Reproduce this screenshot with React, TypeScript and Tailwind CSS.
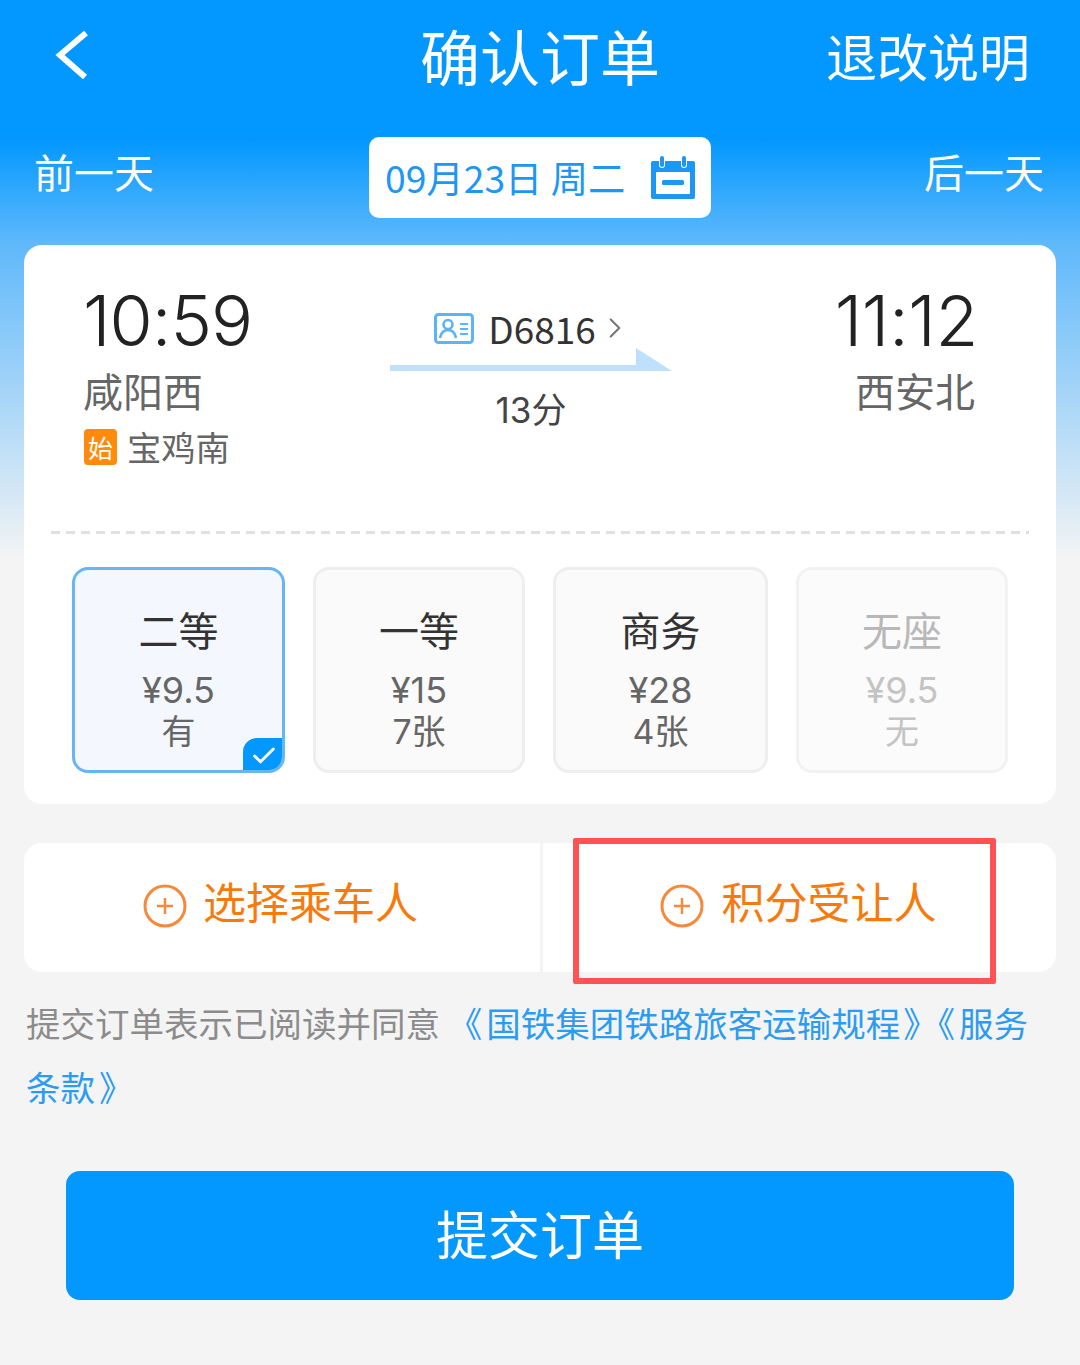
import { ChevronRight, Check } from 'lucide-react';

const seats = [
  { name: '二等', price: '¥9.5', left: '有', active: true, off: false, w: 'w-[213px]' },
  { name: '一等', price: '¥15', left: '7张', active: false, off: false, w: 'w-[212px]' },
  { name: '商务', price: '¥28', left: '4张', active: false, off: false, w: 'w-[215px]' },
  { name: '无座', price: '¥9.5', left: '无', active: false, off: true, w: 'w-[212px]' },
];

const BackIcon = () => (
  <svg width="34" height="48" viewBox="0 0 34 48" fill="none" stroke="#ffffff" strokeWidth="6">
    <path d="M31 2L5 24l25 22" />
  </svg>
);

const PlusIcon = () => (
  <svg width="44" height="44" viewBox="0 0 44 44" fill="none" stroke="#f58a3c" strokeWidth="3">
    <circle cx="22" cy="22" r="20" />
    <path d="M22 14v16M14 22h16" strokeWidth="2.5" />
  </svg>
);

const CalendarIcon = () => (
  <svg width="46" height="46" viewBox="0 0 46 46">
    <path
      d="M3 6h6v4a3 3 0 0 0 6 0V6h16v4a3 3 0 0 0 6 0V6h6a2 2 0 0 1 2 2v34a2 2 0 0 1-2 2H3a2 2 0 0 1-2-2V8a2 2 0 0 1 2-2z"
      fill="#1c97f3"
    />
    <rect x="6" y="17" width="34" height="22" rx="1" fill="#fff" />
    <rect x="12" y="25" width="22" height="5" rx="1.5" fill="#1c97f3" />
    <rect x="10" y="1" width="4" height="11" rx="2" fill="#1c97f3" />
    <rect x="32" y="1" width="4" height="11" rx="2" fill="#1c97f3" />
  </svg>
);

const IdIcon = () => (
  <svg width="40" height="31" viewBox="0 0 40 31" fill="none" stroke="#5cb3f5" strokeWidth="3">
    <rect x="1.5" y="1.5" width="37" height="28" rx="3" />
    <circle cx="14" cy="11.5" r="4.5" strokeWidth="2.6" />
    <path d="M6 25c1-5 4-8 8-8s7 3 8 8" strokeWidth="2.6" />
    <path d="M26 11h8M26 16h8M26 21h8" strokeWidth="2.2" />
  </svg>
);

const Seat = ({ name, price, left, active, off, w }: (typeof seats)[number]) => (
  <div
    className={`relative h-[206px] shrink-0 overflow-hidden rounded-[16px] border-[3px] text-center ${w} ${
      active ? 'border-[#66b5f5] bg-[#f4f8fe]' : off ? 'border-[#f2f2f2] bg-[#fbfbfb]' : 'border-[#eeeeee] bg-[#fafafa]'
    }`}
  >
    <div className={`mt-[32px] text-[40px] leading-[54px] ${off ? 'text-[#b8b8b8]' : 'text-[#333333]'}`}>{name}</div>
    <div
      className={`mt-[14px] text-[36px] leading-[41px] ${off ? 'text-[#c4c4c4]' : 'text-[#666666]'}`}
      style={{ fontFamily: 'Inter, "Noto Sans CJK SC", sans-serif' }}
    >
      {price}
    </div>
    <div
      className={`text-[34px] leading-[41px] ${off ? 'text-[#c4c4c4]' : 'text-[#666666]'}`}
      style={{ fontFamily: 'Inter, "Noto Sans CJK SC", sans-serif' }}
    >
      {left}
    </div>
    {active && (
      <div className="absolute right-[-3px] bottom-[-3px] flex h-[35px] w-[42px] items-center justify-center rounded-tl-[14px] bg-[#0398ff]">
        <Check size={28} color="#ffffff" strokeWidth={2.5} />
      </div>
    )}
  </div>
);

export default function App() {
  return (
    <div
      className="relative h-[1365px] w-[1080px] overflow-hidden bg-[linear-gradient(180deg,#0398ff_0px,#0398ff_140px,#5db8fb_240px,#f4f4f4_560px)] text-[#333333]"
      style={{ fontFamily: '"Noto Sans CJK SC", "Noto Sans", sans-serif' }}
    >
      {/* Header */}
      <div className="flex h-[117px] items-start justify-between pr-[50px] pl-[55px] text-white">
        <div className="mt-[31px]">
          <BackIcon />
        </div>
        <div className="absolute top-[15px] left-0 w-full text-center text-[60px] leading-[80px]">确认订单</div>
        <div className="mt-[20px] text-[51px] leading-[70px]">退改说明</div>
      </div>

      {/* Date switcher */}
      <div className="flex h-[81px] items-start justify-between pr-[36px] pl-[34px] pt-[20px] text-white">
        <div className="mt-[4px] text-[40px] leading-[60px]">前一天</div>
        <div className="absolute left-[369px] top-[137px] flex h-[81px] w-[342px] items-center justify-between rounded-[10px] bg-white pr-[15px] pl-[16px] text-[37.3px] text-[#1c97f3]">
          <span className="whitespace-nowrap">09月23日 周二</span>
          <CalendarIcon />
        </div>
        <div className="mt-[4px] text-[40px] leading-[60px]">后一天</div>
      </div>

      {/* Train card */}
      <div className="mx-[24px] mt-[47px] h-[559px] rounded-[18px] bg-white">
        <div className="flex h-[286px] pt-[34px] pr-[81px] pl-[59px]">
          <div className="w-[300px]">
            <div
              className="text-[70px] leading-[84px] font-light tracking-[-1px] text-[#222222]"
              style={{ fontFamily: 'Inter, sans-serif' }}
            >
              10:59
            </div>
            <div className="mt-[-1px] text-[40px] leading-[56px] text-[#666666]">咸阳西</div>
            <div className="mt-[6px] ml-[1px] flex items-center gap-[10px]">
              <div className="mt-[2px] flex h-[36px] w-[33px] items-center justify-center rounded-[4px] bg-[#ff8a0c] text-[25px] leading-none text-white">
                始
              </div>
              <div className="text-[34.3px] leading-[44px] text-[#666666]">宝鸡南</div>
            </div>
          </div>
          <div className="ml-[7px] w-[282px] pt-[27px] text-center">
            <div className="flex items-center justify-center gap-[14px] pl-[4px]">
              <IdIcon />
              <span className="text-[37px] leading-[44px]">D6816</span>
              <ChevronRight size={34} strokeWidth={1.5} color="#777777" className="ml-[-12px]" />
            </div>
            <svg width="282" height="26" viewBox="0 0 282 26" className="mt-[-2px] block">
              <path d="M0 17h246V0l36 23H0z" fill="#bfe0fb" />
            </svg>
            <div
              className="mt-[11px] text-[35px] leading-[50px] text-[#444444]"
              style={{ fontFamily: 'Inter, "Noto Sans CJK SC", sans-serif' }}
            >
              13分
            </div>
          </div>
          <div className="flex-1 text-right">
            <div
              className="mr-[-3px] text-[70px] leading-[84px] font-light tracking-[-0.4px] text-[#222222]"
              style={{ fontFamily: 'Inter, sans-serif' }}
            >
              11:12
            </div>
            <div className="mt-[-1px] text-[40px] leading-[56px] text-[#666666]">西安北</div>
          </div>
        </div>
        <div className="mx-[27px] h-[3px] bg-[repeating-linear-gradient(90deg,#e0e0e0_0px,#e0e0e0_9px,transparent_9px,transparent_15px)]" />
        <div className="mt-[33px] flex gap-[28px] pl-[48px]">
          {seats.map((s) => (
            <Seat key={s.name} {...s} />
          ))}
        </div>
      </div>

      {/* Passenger buttons */}
      <div className="mx-[24px] mt-[39px] flex h-[129px] overflow-hidden rounded-[18px] bg-white text-[43px] text-[#f77b0c]">
        <div className="flex w-[519px] items-center justify-center gap-[16px] border-r-3 border-[#f4f4f4] pb-[4px] pr-[3px]">
          <PlusIcon />
          <span className="mt-[-10px]">选择乘车人</span>
        </div>
        <div className="flex flex-1 items-center justify-center gap-[18px] pb-[4px] pr-[3px]">
          <PlusIcon />
          <span className="mt-[-10px]">积分受让人</span>
        </div>
      </div>
      <div className="absolute top-[838px] left-[573px] h-[146px] w-[423px] rounded-[2px] border-[6px] border-[#ff5252]" />

      {/* Terms */}
      <div className="mt-[18px] w-[1030px] pl-[26px] text-[34.5px] leading-[64px] text-[#8c8c8c]">
        提交订单表示已阅读并同意{' '}
        <span className="text-[#2c9cf2]">
          <span className="mr-[4px]">《</span>国铁集团铁路旅客运输规程<span className="ml-[3px]">》</span>
          <span className="mr-[4px]">《</span>服务条款<span className="ml-[4px]">》</span>
        </span>
      </div>

      {/* Submit */}
      <div className="mx-[66px] mt-[53px] flex h-[129px] items-center justify-center rounded-[14px] bg-[#0398ff] pb-[6px] text-[52px] text-white">
        提交订单
      </div>
    </div>
  );
}
